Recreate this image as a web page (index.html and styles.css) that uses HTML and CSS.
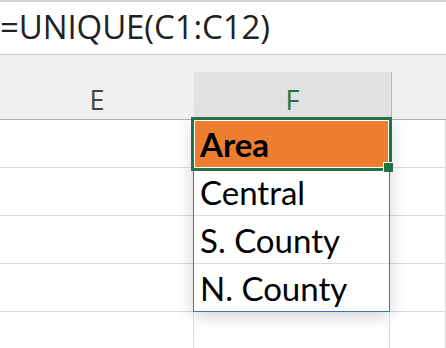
FILE: index.html
```html
<!DOCTYPE html>
<html lang="en">
<head>
    <meta charset="UTF-8">
    <title>UNIQUE</title>
    <link rel="stylesheet" href="styles.css">
</head>
<body>
    <div class="formula-bar">=UNIQUE(C1:C12)</div>
    <div class="gap"></div>

    <div class="sheet">
        <div class="column col-e">
            <div class="col-header">E</div>
            <div class="cell"></div>
            <div class="cell"></div>
            <div class="cell"></div>
            <div class="cell"></div>
            <div class="cell"></div>
        </div>

        <div class="column col-f">
            <div class="col-header active">F</div>
            <div class="spill">
                <div class="cell header-cell">
                    <span>Area</span>
                    <div class="selection"></div>
                    <div class="fill-handle"></div>
                </div>
                <div class="cell">Central</div>
                <div class="cell">S. County</div>
                <div class="cell last">N. County</div>
            </div>
            <div class="cell"></div>
        </div>

        <div class="column col-g">
            <div class="col-header"></div>
            <div class="cell"></div>
            <div class="cell"></div>
            <div class="cell"></div>
            <div class="cell"></div>
            <div class="cell"></div>
        </div>
    </div>
</body>
</html>
```

FILE: styles.css
```css
body {
    margin: 0;
    padding: 0;
    width: 446px;
    height: 348px;
    overflow: hidden;
    background-color: #fff;
    border-top: 2px solid #d2d2d2;
    box-sizing: border-box;
}

.formula-bar {
    height: 52px;
    border-bottom: 1px solid #c6c6c6;
    font-family: 'Open Sans', sans-serif;
    font-size: 33px;
    line-height: 50px;
    color: #222;
    padding-left: 0;
    letter-spacing: -0.1px;
    white-space: nowrap;
}

.gap {
    height: 17px;
    background-color: #f0f0f0;
}

.sheet {
    display: flex;
}

.column {
    display: flex;
    flex-direction: column;
}

.col-e {
    width: 194px;
}

.col-f {
    width: 196px;
    position: relative;
    z-index: 1;
}

.col-g {
    flex: 1;
}

.col-header {
    height: 47px;
    background-color: #f0f0f0;
    border-bottom: 1px solid #b0b0b0;
    font-family: 'Open Sans', sans-serif;
    font-size: 27px;
    line-height: 55px;
    color: #444;
    text-align: center;
    overflow: hidden;
}

.col-header.active {
    background-color: #e1e1e1;
    color: #217346;
    border-right: 1px solid #b8b8b8;
    border-bottom: 3px solid #217346;
    height: 45px;
    margin: 0 -2px 0 0;
    position: relative;
}

.cell {
    height: 47px;
    border-bottom: 1px solid #dadada;
    border-right: 1px solid #dadada;
    font-family: 'Lato', sans-serif;
    font-size: 33px;
    line-height: 48px;
    color: #000;
    padding-left: 6px;
    box-sizing: content-box;
}

.col-e .cell {
    border-right: none;
}

.col-f .cell {
    border-left: 1px solid #dadada;
    margin-left: -1px;
}

.spill {
    border: 1px solid #3c6fc6;
    border-top: none;
    margin-left: -1px;
    margin-right: 0;
    background-color: #fff;
    box-shadow: 0 4px 16px rgba(0, 0, 0, 0.18);
}

.spill .cell {
    border-left: none;
    border-right: none;
    margin-left: 0;
}

.spill .cell.last {
    border-bottom: none;
}

.header-cell {
    position: relative;
    background-color: #ed7d31;
    font-weight: bold;
}

.header-cell span {
    position: relative;
}

.selection {
    position: absolute;
    top: -3px;
    left: -3px;
    right: -3px;
    bottom: -4px;
    border: 3px solid #217346;
    box-shadow: inset 0 0 0 1px #fff;
}

.fill-handle {
    position: absolute;
    right: -4px;
    bottom: -5px;
    width: 9px;
    height: 9px;
    background-color: #217346;
    border: 1px solid #fff;
    border-right: none;
    border-bottom: none;
}
```
